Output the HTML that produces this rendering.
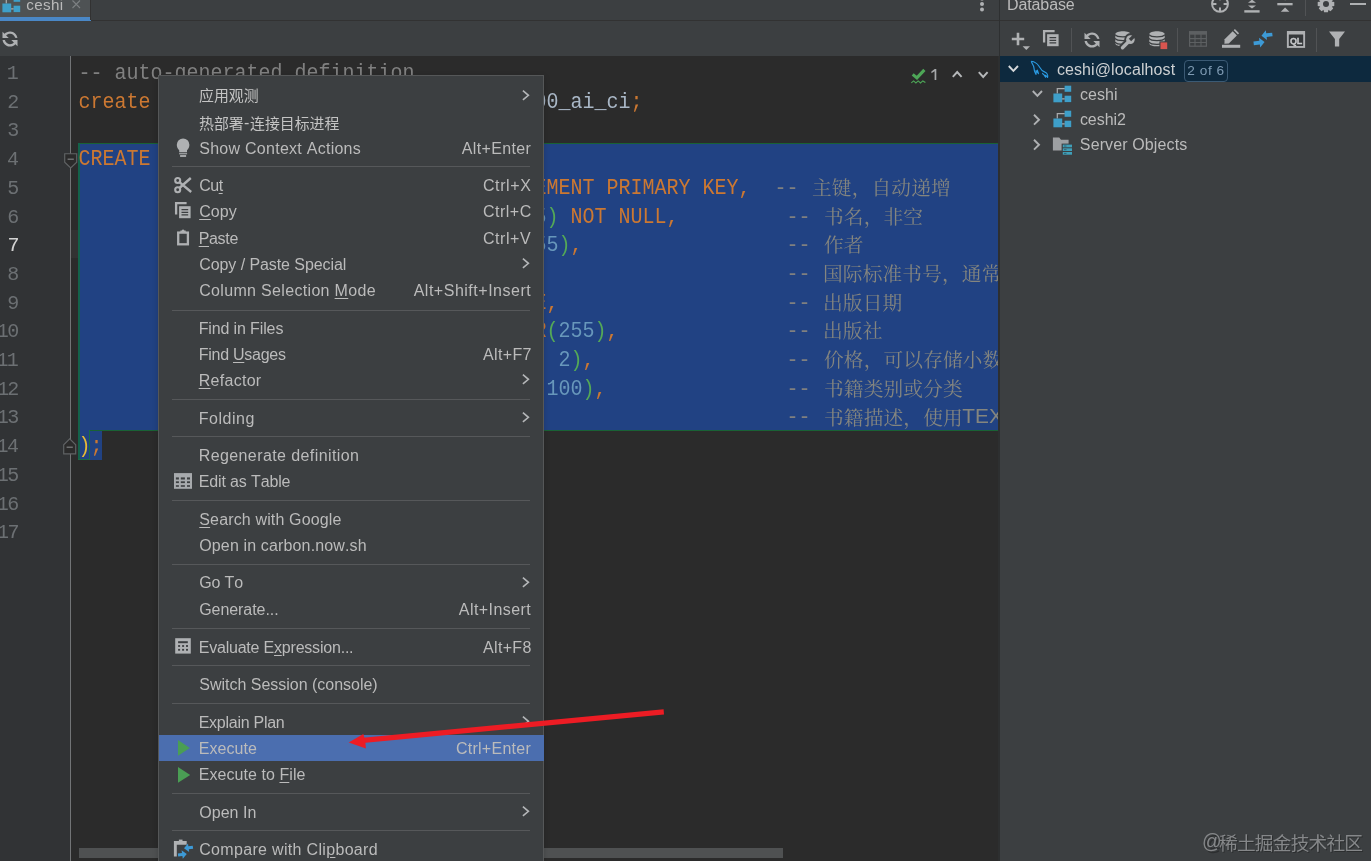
<!DOCTYPE html>
<html><head><meta charset="utf-8"><title>ceshi</title>
<style>
html,body{margin:0;padding:0}
body{width:1371px;height:861px;overflow:hidden;background:#3c3f41;position:relative;font-family:"Liberation Sans",sans-serif;font-kerning:none}
#r{position:absolute;left:0;top:0;width:1371px;height:861px;overflow:hidden;will-change:transform}
#r>div,#r>svg{position:absolute}
#r>svg{overflow:visible}
.t{font-family:"Liberation Sans",sans-serif;line-height:20px;white-space:pre;font-kerning:none}
.m{font-family:"Liberation Mono",monospace;line-height:20px;white-space:pre;font-kerning:none}
u{text-decoration:underline;text-underline-offset:1.6px;text-decoration-thickness:1.4px}
</style></head><body><div id="r">
<div style="left:0px;top:0px;width:90.3px;height:17px;background:#4e5254;"></div>
<div style="left:0px;top:16.5px;width:90.8px;height:4.6px;background:#4a88c7;"></div>
<div style="left:90.5px;top:20px;width:908.3px;height:1px;background:#323232;"></div>
<div style="left:90px;top:0px;width:1px;height:20px;background:#323232;"></div>
<div style="left:0px;top:56px;width:998px;height:805px;background:#2b2b2b;"></div>
<div style="left:0px;top:56px;width:70px;height:805px;background:#313335;"></div>
<div style="left:70.1px;top:56px;width:1.1px;height:805px;background:#727476;"></div>
<div style="left:71.2px;top:229.7px;width:6.8px;height:28.8px;background:#323232;"></div>
<div style="left:998.8px;top:0px;width:1.2px;height:56px;background:#2e3031;"></div>
<div style="left:997.6px;top:56px;width:2.4px;height:805px;background:#2d2f30;"></div>
<div style="left:1000px;top:20px;width:371px;height:1px;background:#323232;"></div>
<div style="left:1000px;top:56.4px;width:371px;height:25.2px;background:#0d293e;"></div>
<div class="t" style="left:26.25px;top:-5.00px;font-size:15.2px;color:#bbbbbb;letter-spacing:0.346px;">ceshi</div>
<svg style="left:0.6px;top:-6.2px;" width="20" height="20" viewBox="0 0 20 20"><path d="M5.3 9.6V4.7H12.8M10 14.8H12.8" fill="none" stroke="#a9abad" stroke-width="1.25"/><rect x="1.4" y="9.5" width="8.8" height="8.8" fill="#3e9fc9"/><rect x="12.6" y="1.7" width="6.6" height="6.1" fill="#3e9fc9"/><rect x="12.6" y="11.7" width="6.6" height="6.4" fill="#3e9fc9"/></svg>
<svg style="left:72px;top:-0.5px;" width="9" height="9" viewBox="0 0 9 9"><path d="M0.5 0.5L8 8M8 0.5L0.5 8" stroke="#7d8183" stroke-width="1.1" fill="none"/></svg>
<svg style="left:0.3999999999999999px;top:29.0px;" width="20" height="20" viewBox="0 0 16 16"><path transform="rotate(3 8 8)" fill="#afb1b3" d="M12.575 11.885C11.474 13.182 9.832 14.004 7.999 14.004C5.039 14.004 2.58 11.862 2.088 9.043L3.948 9.108C4.434 10.89 6.064 12.2 8 12.2C9.301 12.2 10.465 11.608 11.235 10.679L9.05 8.712L14.043 8.45L14.305 13.443ZM3.428 4.117C4.528 2.825 6.168 2.004 7.999 2.004C10.919 2.004 13.351 4.09 13.888 6.853L12.023 6.788C11.502 5.059 9.898 3.8 8 3.8C6.699 3.8 5.535 4.392 4.765 5.321L6.955 7.293L1.962 7.555L1.7 2.562Z"/></svg>
<svg style="left:979px;top:-5px;" width="6" height="18" viewBox="0 0 6 18"><circle cx="3" cy="3.6" r="2" fill="#afb1b3"/><circle cx="3" cy="9" r="2" fill="#afb1b3"/><circle cx="3" cy="14.5" r="2" fill="#afb1b3"/></svg>
<div style="left:78px;top:143px;width:920px;height:288px;background:#214283;"></div>
<div style="left:78px;top:431px;width:24.2px;height:29px;background:#214283;"></div>
<div style="left:78px;top:143px;width:920px;height:1.2px;background:#196235;"></div>
<div style="left:78px;top:143px;width:1.7px;height:317px;background:#14624a;"></div>
<div style="left:89px;top:430px;width:909px;height:1.3px;background:#196235;"></div>
<div style="left:88.6px;top:430px;width:1.4px;height:30px;background:#1a6a45;"></div>
<div style="left:78px;top:458.8px;width:12px;height:1.3px;background:#1a6a45;"></div>
<div class="m" style="left:6.86px;top:64.00px;font-size:20.0px;color:#6c7073;letter-spacing:-1.600px;">1</div>
<div class="m" style="left:7.31px;top:93.00px;font-size:20.0px;color:#6c7073;letter-spacing:-1.600px;">2</div>
<div class="m" style="left:7.17px;top:121.00px;font-size:20.0px;color:#6c7073;letter-spacing:-1.600px;">3</div>
<div class="m" style="left:6.91px;top:150.00px;font-size:20.0px;color:#6c7073;letter-spacing:-1.600px;">4</div>
<div class="m" style="left:7.17px;top:179.00px;font-size:20.0px;color:#6c7073;letter-spacing:-1.600px;">5</div>
<div class="m" style="left:7.20px;top:208.00px;font-size:20.0px;color:#6c7073;letter-spacing:-1.600px;">6</div>
<div class="m" style="left:7.46px;top:236.00px;font-size:20.0px;color:#d2d2d2;letter-spacing:-1.600px;">7</div>
<div class="m" style="left:7.22px;top:265.00px;font-size:20.0px;color:#6c7073;letter-spacing:-1.600px;">8</div>
<div class="m" style="left:7.28px;top:294.00px;font-size:20.0px;color:#6c7073;letter-spacing:-1.600px;">9</div>
<div class="m" style="left:-3.27px;top:322.00px;font-size:20.0px;color:#6c7073;letter-spacing:-1.600px;">10</div>
<div class="m" style="left:-3.54px;top:351.00px;font-size:20.0px;color:#6c7073;letter-spacing:-1.600px;">11</div>
<div class="m" style="left:-3.09px;top:380.00px;font-size:20.0px;color:#6c7073;letter-spacing:-1.600px;">12</div>
<div class="m" style="left:-3.23px;top:408.00px;font-size:20.0px;color:#6c7073;letter-spacing:-1.600px;">13</div>
<div class="m" style="left:-3.49px;top:437.00px;font-size:20.0px;color:#6c7073;letter-spacing:-1.600px;">14</div>
<div class="m" style="left:-3.23px;top:466.00px;font-size:20.0px;color:#6c7073;letter-spacing:-1.600px;">15</div>
<div class="m" style="left:-3.21px;top:495.00px;font-size:20.0px;color:#6c7073;letter-spacing:-1.600px;">16</div>
<div class="m" style="left:-2.94px;top:523.00px;font-size:20.0px;color:#6c7073;letter-spacing:-1.600px;">17</div>
<svg style="left:63.7px;top:153.2px;" width="14" height="16" viewBox="0 0 14 16"><path d="M0.7 0.7H12.7V9.2L6.7 15L0.7 9.2Z" fill="#2b2b2b" stroke="#606365" stroke-width="1.15"/><path d="M3.6 6.2H9.8" stroke="#808385" stroke-width="1.15"/></svg>
<svg style="left:63.3px;top:437.6px;" width="14" height="17" viewBox="0 0 14 17"><path d="M0.7 15.9H12.7V6.8L6.7 0.9L0.7 6.8Z" fill="#2b2b2b" stroke="#606365" stroke-width="1.15"/><path d="M3.6 9.2H9.8" stroke="#808385" stroke-width="1.15"/></svg>
<div class="m" style="left:78.50px;top:62.00px;font-size:20px;line-height:24px;transform:scaleY(1.07);transform-origin:0 17px"><span style="color:#808080">-- auto-generated definition</span></div>
<div class="m" style="left:78.50px;top:91.00px;font-size:20px;line-height:24px;transform:scaleY(1.07);transform-origin:0 17px"><span style="color:#cc7832">create schema </span><span style="color:#a9b7c6">ceshi </span><span style="color:#cc7832">collate </span><span style="color:#a9b7c6">utf8mb4_0900_ai_ci</span><span style="color:#cc7832">;</span></div>
<div class="m" style="left:78.50px;top:148.00px;font-size:20px;line-height:24px;transform:scaleY(1.07);transform-origin:0 17px"><span style="color:#cc7832">CREATE TABLE </span><span style="color:#a9b7c6">books </span><span style="color:#e8ba36">(</span></div>
<div class="m" style="left:534.50px;top:177.00px;font-size:20px;line-height:24px;transform:scaleY(1.07);transform-origin:0 17px"><span style="color:#cc7832">EMENT PRIMARY KEY,</span><span style="color:#808080">  -- </span></div>
<div class="m" style="left:534.50px;top:206.00px;font-size:20px;line-height:24px;transform:scaleY(1.07);transform-origin:0 17px"><span style="color:#6897bb">5</span><span style="color:#54a857">)</span><span style="color:#cc7832"> NOT NULL,</span><span style="color:#808080">         -- </span></div>
<div class="m" style="left:522.50px;top:234.00px;font-size:20px;line-height:24px;transform:scaleY(1.07);transform-origin:0 17px"><span style="color:#6897bb">255</span><span style="color:#54a857">)</span><span style="color:#cc7832">,</span><span style="color:#808080">                 -- </span></div>
<div class="m" style="left:786.50px;top:263.00px;font-size:20px;line-height:24px;transform:scaleY(1.07);transform-origin:0 17px"><span style="color:#808080">-- </span></div>
<div class="m" style="left:534.50px;top:292.00px;font-size:20px;line-height:24px;transform:scaleY(1.07);transform-origin:0 17px"><span style="color:#cc7832">E,</span><span style="color:#808080">                   -- </span></div>
<div class="m" style="left:534.50px;top:320.00px;font-size:20px;line-height:24px;transform:scaleY(1.07);transform-origin:0 17px"><span style="color:#cc7832">R</span><span style="color:#54a857">(</span><span style="color:#6897bb">255</span><span style="color:#54a857">)</span><span style="color:#cc7832">,</span><span style="color:#808080">              -- </span></div>
<div class="m" style="left:534.50px;top:349.00px;font-size:20px;line-height:24px;transform:scaleY(1.07);transform-origin:0 17px"><span style="color:#cc7832">, </span><span style="color:#6897bb">2</span><span style="color:#54a857">)</span><span style="color:#cc7832">,</span><span style="color:#808080">                -- </span></div>
<div class="m" style="left:534.50px;top:378.00px;font-size:20px;line-height:24px;transform:scaleY(1.07);transform-origin:0 17px"><span style="color:#54a857">(</span><span style="color:#6897bb">100</span><span style="color:#54a857">)</span><span style="color:#cc7832">,</span><span style="color:#808080">               -- </span></div>
<div class="m" style="left:786.50px;top:406.00px;font-size:20px;line-height:24px;transform:scaleY(1.07);transform-origin:0 17px"><span style="color:#808080">-- </span></div>
<div class="m" style="left:78.50px;top:435.00px;font-size:20px;line-height:24px;transform:scaleY(1.07);transform-origin:0 17px"><span style="color:#e8ba36">)</span><span style="color:#cc7832">;</span></div>
<svg role="img" aria-label="主键，自动递增" style="left:811.77px;top:174.90px;" width="143.0" height="27.6"><text x="0" y="19.70" font-size="19.7" fill="#84857f" letter-spacing="0.15" font-family="'Liberation Serif','Noto Serif CJK SC',serif">主键，自动递增</text></svg>
<svg role="img" aria-label="书名，非空" style="left:823.52px;top:203.60px;" width="103.2" height="27.6"><text x="0" y="19.70" font-size="19.7" fill="#84857f" letter-spacing="0.15" font-family="'Liberation Serif','Noto Serif CJK SC',serif">书名，非空</text></svg>
<svg role="img" aria-label="作者" style="left:823.97px;top:232.30px;" width="43.7" height="27.6"><text x="0" y="19.70" font-size="19.7" fill="#84857f" letter-spacing="0.15" font-family="'Liberation Serif','Noto Serif CJK SC',serif">作者</text></svg>
<svg role="img" aria-label="国际标准书号，通常" style="left:822.65px;top:261.00px;" width="182.7" height="27.6"><text x="0" y="19.70" font-size="19.7" fill="#84857f" letter-spacing="0.15" font-family="'Liberation Serif','Noto Serif CJK SC',serif">国际标准书号，通常</text></svg>
<svg role="img" aria-label="出版日期" style="left:822.87px;top:289.70px;" width="83.4" height="27.6"><text x="0" y="19.70" font-size="19.7" fill="#84857f" letter-spacing="0.15" font-family="'Liberation Serif','Noto Serif CJK SC',serif">出版日期</text></svg>
<svg role="img" aria-label="出版社" style="left:822.87px;top:318.40px;" width="63.6" height="27.6"><text x="0" y="19.70" font-size="19.7" fill="#84857f" letter-spacing="0.15" font-family="'Liberation Serif','Noto Serif CJK SC',serif">出版社</text></svg>
<svg role="img" aria-label="价格，可以存储小数" style="left:823.93px;top:347.10px;" width="182.7" height="27.6"><text x="0" y="19.70" font-size="19.7" fill="#84857f" letter-spacing="0.15" font-family="'Liberation Serif','Noto Serif CJK SC',serif">价格，可以存储小数</text></svg>
<svg role="img" aria-label="书籍类别或分类" style="left:823.52px;top:375.80px;" width="143.0" height="27.6"><text x="0" y="19.70" font-size="19.7" fill="#84857f" letter-spacing="0.15" font-family="'Liberation Serif','Noto Serif CJK SC',serif">书籍类别或分类</text></svg>
<svg role="img" aria-label="书籍描述，使用" style="left:823.52px;top:404.50px;" width="143.0" height="27.6"><text x="0" y="19.70" font-size="19.7" fill="#84857f" letter-spacing="0.15" font-family="'Liberation Serif','Noto Serif CJK SC',serif">书籍描述，使用</text></svg>
<div class="t" style="left:962.33px;top:406.00px;font-size:20.8px;color:#84857f;">TEX</div>
<div style="left:997.6px;top:56px;width:2.4px;height:805px;background:#2d2f30;"></div>
<div style="left:1000px;top:82px;width:371px;height:779px;background:#3c3f41;"></div>
<svg style="left:910.5px;top:67.5px;" width="15" height="16" viewBox="0 0 15 16"><path d="M1.7 6.4L5.9 9.9L13.4 1.9" fill="none" stroke="#4da657" stroke-width="3.1"/><path d="M0.3 14.9L2.6 12.9L4.9 14.9L7.2 12.9L9.5 14.9L11.8 12.9L14.4 14.6" fill="none" stroke="#4da657" stroke-width="1.15"/></svg>
<svg style="left:930px;top:68px;" width="8" height="13" viewBox="0 0 8 13"><path d="M4.7 1.1H6.3V11.9H4.6V3.3L1.4 5.2V3.5Z" fill="#a6a8aa"/></svg>
<svg style="left:951.8px;top:70.6px;" width="10.4" height="7" viewBox="0 0 10.4 7"><path d="M0.8 6L5.2 1L9.6 6" fill="none" stroke="#b6b8ba" stroke-width="1.9"/></svg>
<svg style="left:977.8px;top:71.3px;" width="10.4" height="7" viewBox="0 0 10.4 7"><path d="M0.8 1L5.2 6L9.6 1" fill="none" stroke="#b6b8ba" stroke-width="1.9"/></svg>
<div style="left:79px;top:848.3px;width:704.3px;height:9.7px;background:#4f5152;"></div>
<div class="t" style="left:1006.99px;top:-5.00px;font-size:16px;color:#bbbbbb;letter-spacing:-0.110px;">Database</div>
<svg style="left:1210px;top:-6px;" width="20" height="20" viewBox="0 0 20 20"><circle cx="10" cy="9.9" r="7.9" fill="none" stroke="#afb1b3" stroke-width="2"/><path d="M10 2V6.3M10 13.5V17.8M2.1 9.9H6.4M13.6 9.9H17.9" stroke="#afb1b3" stroke-width="2"/></svg>
<svg style="left:1242px;top:-7px;" width="20" height="20" viewBox="0 0 20 20"><rect x="2.3" y="17.2" width="15.3" height="2.4" fill="#afb1b3"/><path d="M6 12.6H14L10 15.6Z" fill="#afb1b3"/><path d="M6 9.8H14L10 6.6Z" fill="#afb1b3"/></svg>
<svg style="left:1275px;top:-7px;" width="20" height="20" viewBox="0 0 20 20"><rect x="2.3" y="10" width="15.3" height="2.3" fill="#afb1b3"/><path d="M5.8 18.8H14.4L10.1 14.6Z" fill="#afb1b3"/><path d="M5.8 3.2H14.4L10.1 7.4Z" fill="#afb1b3"/></svg>
<div style="left:1305px;top:0px;width:1px;height:15.5px;background:#515355;"></div>
<svg style="left:1315.7px;top:-6px;" width="20" height="20" viewBox="0 0 20 20"><path fill-rule="evenodd" fill="#afb1b3" d="M8.06,1.72 L11.94,1.72 L12.49,4.43 L12.18,4.30 L14.48,2.78 L17.22,5.52 L15.70,7.82 L15.57,7.51 L18.28,8.06 L18.28,11.94 L15.57,12.49 L15.70,12.18 L17.22,14.48 L14.48,17.22 L12.18,15.70 L12.49,15.57 L11.94,18.28 L8.06,18.28 L7.51,15.57 L7.82,15.70 L5.52,17.22 L2.78,14.48 L4.30,12.18 L4.43,12.49 L1.72,11.94 L1.72,8.06 L4.43,7.51 L4.30,7.82 L2.78,5.52 L5.52,2.78 L7.82,4.30 L7.51,4.43Z M10 7A3 3 0 1 0 10 13A3 3 0 1 0 10 7Z"/></svg>
<div style="left:1350.4px;top:2.7px;width:15.4px;height:2.4px;background:#afb1b3;"></div>
<svg style="left:1011px;top:32px;" width="20" height="19" viewBox="0 0 20 19"><path d="M0.8 7H13.2M7 0.8V13.2" stroke="#afb1b3" stroke-width="2.6"/><path d="M11.6 14.2H19L15.3 18Z" fill="#afb1b3"/></svg>
<svg style="left:1043.2px;top:30.4px;" width="17" height="17" viewBox="0 0 17 17"><path d="M1.1 12.6V1.1H11.6" fill="none" stroke="#afb1b3" stroke-width="2.3"/><rect x="4.1" y="4.2" width="11.5" height="12" fill="#afb1b3"/><path d="M6.5 7.7H13.2M6.5 10.3H13.2M6.5 12.9H13.2" stroke="#3c3f41" stroke-width="1.3"/></svg>
<div style="left:1071px;top:28px;width:1px;height:24px;background:#515355;"></div>
<svg style="left:1082.1000000000001px;top:29.9px;" width="20" height="20" viewBox="0 0 16 16"><path transform="rotate(3 8 8)" fill="#afb1b3" d="M12.575 11.885C11.474 13.182 9.832 14.004 7.999 14.004C5.039 14.004 2.58 11.862 2.088 9.043L3.948 9.108C4.434 10.89 6.064 12.2 8 12.2C9.301 12.2 10.465 11.608 11.235 10.679L9.05 8.712L14.043 8.45L14.305 13.443ZM3.428 4.117C4.528 2.825 6.168 2.004 7.999 2.004C10.919 2.004 13.351 4.09 13.888 6.853L12.023 6.788C11.502 5.059 9.898 3.8 8 3.8C6.699 3.8 5.535 4.392 4.765 5.321L6.955 7.293L1.962 7.555L1.7 2.562Z"/></svg>
<svg style="left:1114.6px;top:31.2px;" width="20" height="19" viewBox="0 0 20 19"><path d="M0.3 3.2C0.3 -0.7 15.7 -0.7 15.7 3.2V12.2C15.7 16.4 0.3 16.4 0.3 12.2Z" fill="#afb1b3"/><path d="M0 3.6C2 6.6 14 6.6 16 3.6M0 7.4C2 10.4 14 10.4 16 7.4M0 11.2C2 14.2 14 14.2 16 11.2" fill="none" stroke="#3c3f41" stroke-width="1.25"/><path d="M1.6 20L20 1.6V20Z" fill="#3c3f41"/><path d="M7.3 16.9L15 9.2" stroke="#3c3f41" stroke-width="7.4" stroke-linecap="round" fill="none"/><circle cx="15.6" cy="8.4" r="6.3" fill="#3c3f41"/><path d="M7.5 16.7L15 9.2" stroke="#afb1b3" stroke-width="3.4" stroke-linecap="round" fill="none"/><circle cx="15.4" cy="8.6" r="4.3" fill="#afb1b3"/><path d="M15 9L20.4 3.6" stroke="#3c3f41" stroke-width="3.3" fill="none"/></svg>
<svg style="left:1148.8px;top:31.2px;" width="20" height="19" viewBox="0 0 20 19"><path d="M0.3 3.2C0.3 -0.7 15.7 -0.7 15.7 3.2V12.2C15.7 16.4 0.3 16.4 0.3 12.2Z" fill="#afb1b3"/><path d="M0 3.6C2 6.6 14 6.6 16 3.6M0 7.4C2 10.4 14 10.4 16 7.4M0 11.2C2 14.2 14 14.2 16 11.2" fill="none" stroke="#3c3f41" stroke-width="1.25"/><rect x="10.4" y="10.3" width="9" height="9" fill="#3c3f41"/><rect x="11.5" y="11.4" width="6.7" height="6.7" fill="#d9554f"/></svg>
<div style="left:1177px;top:28px;width:1px;height:24px;background:#515355;"></div>
<svg style="left:1187.6px;top:29px;" width="20" height="20" viewBox="0 0 20 20"><rect x="1.6" y="2.7" width="16.8" height="14.5" fill="none" stroke="#5d6062" stroke-width="1.2"/><rect x="1" y="2.1" width="18" height="3.6" fill="#5d6062"/><path d="M7 5V17.5M13 5V17.5M1.5 9.6H18.5M1.5 13.5H18.5" stroke="#5d6062" stroke-width="1.1" fill="none"/></svg>
<svg style="left:1221px;top:29px;" width="20" height="20" viewBox="0 0 20 20"><rect x="1" y="15.8" width="18.2" height="3" fill="#afb1b3"/><path d="M3.4 14.7L3.6 10.3L11.7 2.2L15.9 6.4L7.8 14.5Z" fill="#afb1b3"/><path d="M12.7 1.2L13.9 0L18.1 4.2L16.9 5.4Z" fill="#afb1b3"/></svg>
<svg style="left:1253px;top:29px;" width="20" height="20" viewBox="0 0 20 20"><path d="M8.4 6.2L13.4 1.2V4.4H19.4V8H13.4V11.2Z" fill="#3d9ad6" transform="rotate(-7 13 6)"/><path d="M11.6 13.6L6.6 18.6V15.4H0.6V11.8H6.6V8.6Z" fill="#3d9ad6" transform="rotate(-7 7 13.6)"/></svg>
<svg style="left:1286px;top:30px;" width="20" height="19" viewBox="0 0 20 19"><rect x="1.9" y="2.1" width="16.2" height="14.8" fill="none" stroke="#afb1b3" stroke-width="2"/><rect x="1" y="1.1" width="18" height="3.6" fill="#afb1b3"/><rect x="2.9" y="4.7" width="14.2" height="11.2" fill="#35383a"/><text x="4.1" y="14.4" font-family="Liberation Sans, sans-serif" font-weight="700" font-size="9" fill="#c9cbcd" stroke="#c9cbcd" stroke-width="0.3" letter-spacing="-0.3">QL</text></svg>
<div style="left:1316.2px;top:28px;width:1px;height:24px;background:#515355;"></div>
<svg style="left:1328px;top:30px;" width="20" height="18" viewBox="0 0 20 18"><path d="M1 1.4H17L11.2 9V16.6H6.9V9Z" fill="#afb1b3"/></svg>
<div class="t" style="left:1056.92px;top:60.00px;font-size:16px;color:#cdd0d2;letter-spacing:0.104px;">ceshi@localhost</div>
<div class="t" style="left:1079.92px;top:85.00px;font-size:16px;color:#bbbbbb;letter-spacing:0.052px;">ceshi</div>
<div class="t" style="left:1079.92px;top:110.00px;font-size:16px;color:#bbbbbb;letter-spacing:-0.033px;">ceshi2</div>
<div class="t" style="left:1079.87px;top:135.00px;font-size:16px;color:#bbbbbb;letter-spacing:0.122px;">Server Objects</div>
<div style="left:1184.3px;top:60px;width:41.6px;height:19.8px;border:1px solid #3b5a74;border-radius:4px;box-sizing:content-box"></div>
<div class="t" style="left:1187.22px;top:61.00px;font-size:13.6px;color:#7f9bb3;letter-spacing:0.591px;">2 of 6</div>
<svg style="left:1008.4px;top:65.1px;" width="10.8" height="6.9" viewBox="0 0 10.8 6.9"><path d="M0.8 1L5.4 5.9L10.0 1" fill="none" stroke="#d5d8da" stroke-width="1.9"/></svg>
<svg style="left:1031.6px;top:90.2px;" width="10.8" height="6.9" viewBox="0 0 10.8 6.9"><path d="M0.8 1L5.4 5.9L10.0 1" fill="none" stroke="#afb1b3" stroke-width="1.9"/></svg>
<svg style="left:1032.6px;top:114.3px;" width="7" height="11.5" viewBox="0 0 7 11.5"><path d="M1 0.8L6 5.7L1 10.6" fill="none" stroke="#afb1b3" stroke-width="1.9"/></svg>
<svg style="left:1032.6px;top:139.2px;" width="7" height="11.5" viewBox="0 0 7 11.5"><path d="M1 0.8L6 5.7L1 10.6" fill="none" stroke="#afb1b3" stroke-width="1.9"/></svg>
<svg style="left:1030px;top:60px;" width="20" height="19" viewBox="0 0 20 19"><path d="M1.3 1.2C4.6 1.6 7.2 3.4 9 6.2C10.6 8.8 11.6 10.8 14 11.6C15.6 12.2 17 13 17.4 14.4C17.8 15.6 18 16.8 17.6 17.4C16.8 16.4 16.2 15.4 15.2 15.2C15.6 16 15.8 16.6 15.6 17.2C14.6 15.4 13.6 14.2 12.2 13.2M1.3 1.2C1.6 3 2.6 4.4 3.4 5.8C4.2 7.6 4 9.6 4.6 11.4C5 12.6 5.6 13.4 6 14.4C6.2 12.8 6.2 11.6 6 10.6C7 11.6 7.6 12.8 8.4 13.6C8 12 7.8 11 7.2 9.8" fill="none" stroke="#2b9be3" stroke-width="1.15" stroke-linejoin="round"/></svg>
<svg style="left:1051.8px;top:84.0px;" width="20" height="20" viewBox="0 0 20 20"><path d="M5.3 9.6V4.7H12.8M10 14.8H12.8" fill="none" stroke="#a9abad" stroke-width="1.25"/><rect x="1.4" y="9.5" width="8.8" height="8.8" fill="#3e9fc9"/><rect x="12.6" y="1.7" width="6.6" height="6.1" fill="#3e9fc9"/><rect x="12.6" y="11.7" width="6.6" height="6.4" fill="#3e9fc9"/></svg>
<svg style="left:1051.8px;top:109.1px;" width="20" height="20" viewBox="0 0 20 20"><path d="M5.3 9.6V4.7H12.8M10 14.8H12.8" fill="none" stroke="#a9abad" stroke-width="1.25"/><rect x="1.4" y="9.5" width="8.8" height="8.8" fill="#3e9fc9"/><rect x="12.6" y="1.7" width="6.6" height="6.1" fill="#3e9fc9"/><rect x="12.6" y="11.7" width="6.6" height="6.4" fill="#3e9fc9"/></svg>
<svg style="left:1052px;top:136px;" width="21" height="20" viewBox="0 0 21 20"><path d="M0.9 1.4H7.2L9 3.8H16.6V12.4H10.2V14.6H0.9Z" fill="#9da0a3"/><rect x="9.6" y="7.6" width="10.6" height="11.8" fill="#3c3f41"/><rect x="10.8" y="8.6" width="9.2" height="2.7" fill="#3f9fb8"/><rect x="10.8" y="12.3" width="9.2" height="2.7" fill="#3f9fb8"/><rect x="10.8" y="16" width="9.2" height="2.7" fill="#3f9fb8"/><path d="M12 10H14.5M12 13.7H14.5M12 17.4H14.5" stroke="#2e5f6e" stroke-width="0.9"/></svg>
<div style="left:158px;top:75px;width:384px;height:786px;background:#3c3f41;border:1px solid #555758;border-bottom:none;box-shadow:0 2px 6px rgba(0,0,0,.18)"></div>
<div style="left:159px;top:735.1px;width:384.5px;height:25.8px;background:#4b6eaf;"></div>
<div style="left:172px;top:166.0px;width:358px;height:1.1px;background:#56585a;"></div>
<div style="left:172px;top:309.5px;width:358px;height:1.1px;background:#56585a;"></div>
<div style="left:172px;top:399.3px;width:358px;height:1.1px;background:#56585a;"></div>
<div style="left:172px;top:436.0px;width:358px;height:1.1px;background:#56585a;"></div>
<div style="left:172px;top:499.9px;width:358px;height:1.1px;background:#56585a;"></div>
<div style="left:172px;top:564.2px;width:358px;height:1.1px;background:#56585a;"></div>
<div style="left:172px;top:628.1px;width:358px;height:1.1px;background:#56585a;"></div>
<div style="left:172px;top:665.0px;width:358px;height:1.1px;background:#56585a;"></div>
<div style="left:172px;top:702.5px;width:358px;height:1.1px;background:#56585a;"></div>
<div style="left:172px;top:792.7px;width:358px;height:1.1px;background:#56585a;"></div>
<div style="left:172px;top:830.0px;width:358px;height:1.1px;background:#56585a;"></div>
<svg role="img" aria-label="应用观测" style="left:198.76px;top:85.70px;" width="63.4" height="20.9"><text x="0" y="14.90" font-size="14.9" fill="#c4c4c4" font-family="'Liberation Sans','Noto Sans CJK SC',sans-serif">应用观测</text></svg>
<svg role="img" aria-label="热部署" style="left:198.66px;top:113.60px;" width="48.5" height="20.9"><text x="0" y="14.90" font-size="14.9" fill="#c4c4c4" font-family="'Liberation Sans','Noto Sans CJK SC',sans-serif">热部署</text></svg>
<div class="t" style="left:243.89px;top:113.00px;font-size:16px;color:#c4c4c4;">-</div>
<svg role="img" aria-label="连接目标进程" style="left:250.15px;top:113.60px;" width="93.1" height="20.9"><text x="0" y="14.90" font-size="14.9" fill="#c4c4c4" font-family="'Liberation Sans','Noto Sans CJK SC',sans-serif">连接目标进程</text></svg>
<div class="t" style="left:199.27px;top:139.00px;font-size:16px;color:#bbbbbb;letter-spacing:0.262px;">Show Context Actions</div>
<div class="t" style="left:461.77px;top:139.00px;font-size:16px;color:#bbbbbb;letter-spacing:0.355px;">Alt+Enter</div>
<div class="t" style="left:199.19px;top:176.00px;font-size:16px;color:#bbbbbb;letter-spacing:-0.484px;">Cu<u>t</u></div>
<div class="t" style="left:482.89px;top:176.00px;font-size:16px;color:#bbbbbb;letter-spacing:0.630px;">Ctrl+X</div>
<div class="t" style="left:199.19px;top:202.00px;font-size:16px;color:#bbbbbb;letter-spacing:0.097px;"><u>C</u>opy</div>
<div class="t" style="left:482.89px;top:202.00px;font-size:16px;color:#bbbbbb;letter-spacing:0.508px;">Ctrl+C</div>
<div class="t" style="left:198.69px;top:229.00px;font-size:16px;color:#bbbbbb;letter-spacing:-0.323px;"><u>P</u>aste</div>
<div class="t" style="left:482.89px;top:229.00px;font-size:16px;color:#bbbbbb;letter-spacing:0.577px;">Ctrl+V</div>
<div class="t" style="left:199.19px;top:255.00px;font-size:16px;color:#bbbbbb;letter-spacing:-0.071px;">Copy / Paste Special</div>
<svg style="left:521.6px;top:257.8px;" width="8" height="11" viewBox="0 0 8 11"><path d="M0.9 0.7L6.4 5.3L0.9 9.9" fill="none" stroke="#b4b6b8" stroke-width="1.6"/></svg>
<div class="t" style="left:199.19px;top:281.00px;font-size:16px;color:#bbbbbb;letter-spacing:0.328px;">Column Selection <u>M</u>ode</div>
<div class="t" style="left:413.67px;top:281.00px;font-size:16px;color:#bbbbbb;letter-spacing:0.511px;">Alt+Shift+Insert</div>
<div class="t" style="left:198.69px;top:319.00px;font-size:16px;color:#bbbbbb;letter-spacing:-0.130px;">Find in Files</div>
<div class="t" style="left:198.69px;top:345.00px;font-size:16px;color:#bbbbbb;letter-spacing:-0.253px;">Find <u>U</u>sages</div>
<div class="t" style="left:483.07px;top:345.00px;font-size:16px;color:#bbbbbb;letter-spacing:0.330px;">Alt+F7</div>
<div class="t" style="left:198.69px;top:371.00px;font-size:16px;color:#bbbbbb;letter-spacing:0.287px;"><u>R</u>efactor</div>
<svg style="left:521.6px;top:374.2px;" width="8" height="11" viewBox="0 0 8 11"><path d="M0.9 0.7L6.4 5.3L0.9 9.9" fill="none" stroke="#b4b6b8" stroke-width="1.6"/></svg>
<div class="t" style="left:198.69px;top:409.00px;font-size:16px;color:#bbbbbb;letter-spacing:0.528px;">Folding</div>
<svg style="left:521.6px;top:412.0px;" width="8" height="11" viewBox="0 0 8 11"><path d="M0.9 0.7L6.4 5.3L0.9 9.9" fill="none" stroke="#b4b6b8" stroke-width="1.6"/></svg>
<div class="t" style="left:198.69px;top:446.00px;font-size:16px;color:#bbbbbb;letter-spacing:0.407px;">Regenerate definition</div>
<div class="t" style="left:198.69px;top:472.00px;font-size:16px;color:#bbbbbb;letter-spacing:-0.130px;">Edit as Table</div>
<div class="t" style="left:199.27px;top:510.00px;font-size:16px;color:#bbbbbb;letter-spacing:0.147px;"><u>S</u>earch with Google</div>
<div class="t" style="left:199.24px;top:536.00px;font-size:16px;color:#bbbbbb;letter-spacing:0.143px;">Open in carbon.now.sh</div>
<div class="t" style="left:199.20px;top:573.00px;font-size:16px;color:#bbbbbb;letter-spacing:-0.121px;">Go To</div>
<svg style="left:521.6px;top:576.7px;" width="8" height="11" viewBox="0 0 8 11"><path d="M0.9 0.7L6.4 5.3L0.9 9.9" fill="none" stroke="#b4b6b8" stroke-width="1.6"/></svg>
<div class="t" style="left:199.20px;top:600.00px;font-size:16px;color:#bbbbbb;letter-spacing:-0.058px;">Generate...</div>
<div class="t" style="left:458.87px;top:600.00px;font-size:16px;color:#bbbbbb;letter-spacing:0.424px;">Alt+Insert</div>
<div class="t" style="left:198.69px;top:638.00px;font-size:16px;color:#bbbbbb;letter-spacing:-0.206px;">Evaluate E<u>x</u>pression...</div>
<div class="t" style="left:483.07px;top:638.00px;font-size:16px;color:#bbbbbb;letter-spacing:0.308px;">Alt+F8</div>
<div class="t" style="left:199.27px;top:675.00px;font-size:16px;color:#bbbbbb;letter-spacing:-0.014px;">Switch Session (console)</div>
<div class="t" style="left:198.69px;top:713.00px;font-size:16px;color:#bbbbbb;letter-spacing:-0.263px;">Explain Plan</div>
<svg style="left:521.6px;top:716.2px;" width="8" height="11" viewBox="0 0 8 11"><path d="M0.9 0.7L6.4 5.3L0.9 9.9" fill="none" stroke="#b4b6b8" stroke-width="1.6"/></svg>
<div class="t" style="left:198.69px;top:739.00px;font-size:16px;color:#bbbbbb;letter-spacing:0.052px;">Execute</div>
<div class="t" style="left:455.89px;top:739.00px;font-size:16px;color:#bbbbbb;letter-spacing:0.279px;">Ctrl+Enter</div>
<div class="t" style="left:198.69px;top:765.00px;font-size:16px;color:#bbbbbb;letter-spacing:0.064px;">Execute to <u>F</u>ile</div>
<div class="t" style="left:199.24px;top:803.00px;font-size:16px;color:#bbbbbb;letter-spacing:0.045px;">Open In</div>
<svg style="left:521.6px;top:805.9000000000001px;" width="8" height="11" viewBox="0 0 8 11"><path d="M0.9 0.7L6.4 5.3L0.9 9.9" fill="none" stroke="#b4b6b8" stroke-width="1.6"/></svg>
<div class="t" style="left:199.19px;top:840.00px;font-size:16px;color:#bbbbbb;letter-spacing:0.324px;">Compare with Cli<u>p</u>board</div>
<svg style="left:521.6px;top:89.8px;" width="8" height="11" viewBox="0 0 8 11"><path d="M0.9 0.7L6.4 5.3L0.9 9.9" fill="none" stroke="#b4b6b8" stroke-width="1.6"/></svg>
<svg style="left:173px;top:137px;" width="20" height="21" viewBox="0 0 20 21"><path d="M6.2 15.2V13.2C4.6 12 3.8 10 3.8 7.8A6.3 6.3 0 0 1 16.4 7.8C16.4 10 15.6 12 14 13.2V15.2Z" fill="#afb1b3"/><rect x="6.1" y="16.2" width="8" height="1.1" fill="#afb1b3"/><rect x="7.1" y="18.1" width="6" height="1.8" fill="#afb1b3"/></svg>
<svg style="left:173px;top:175px;" width="20" height="20" viewBox="0 0 20 20"><circle cx="4.7" cy="5.5" r="2.5" fill="none" stroke="#afb1b3" stroke-width="2.1"/><circle cx="4.7" cy="14.7" r="2.5" fill="none" stroke="#afb1b3" stroke-width="2.1"/><path d="M6.4 7.2L18.2 17M6.4 13L17.8 3" stroke="#afb1b3" stroke-width="2.4" fill="none"/></svg>
<svg style="left:175.4px;top:202.0px;" width="17" height="17" viewBox="0 0 17 17"><path d="M1.1 12.6V1.1H11.6" fill="none" stroke="#afb1b3" stroke-width="2.3"/><rect x="4.1" y="4.2" width="11.5" height="12" fill="#afb1b3"/><path d="M6.5 7.7H13.2M6.5 10.3H13.2M6.5 12.9H13.2" stroke="#3c3f41" stroke-width="1.3"/></svg>
<svg style="left:175px;top:228px;" width="16" height="19" viewBox="0 0 16 19"><rect x="3.2" y="4.6" width="9.7" height="11.7" fill="none" stroke="#afb1b3" stroke-width="2.3"/><path d="M5.4 4.2V2.5H6.8A1.3 1.3 0 0 1 9.3 2.5H10.7V4.2Z" fill="#afb1b3"/></svg>
<svg style="left:173px;top:471px;" width="20" height="20" viewBox="0 0 20 20"><rect x="1" y="2.1" width="18" height="15.7" fill="#a7aaad"/><rect x="2.9" y="6.4" width="3" height="2.1" fill="#3c3f41"/><rect x="2.9" y="10.3" width="3" height="1.8" fill="#3c3f41"/><rect x="2.9" y="14.2" width="3" height="1.6" fill="#3c3f41"/><rect x="7.8" y="6.4" width="4.1" height="2.1" fill="#3c3f41"/><rect x="7.8" y="10.3" width="4.1" height="1.8" fill="#3c3f41"/><rect x="7.8" y="14.2" width="4.1" height="1.6" fill="#3c3f41"/><rect x="14" y="6.4" width="3" height="2.1" fill="#3c3f41"/><rect x="14" y="10.3" width="3" height="1.8" fill="#3c3f41"/><rect x="14" y="14.2" width="3" height="1.6" fill="#3c3f41"/></svg>
<svg style="left:173px;top:636px;" width="20" height="20" viewBox="0 0 20 20"><rect x="2.2" y="2.2" width="15.6" height="15.4" fill="#afb1b3"/><rect x="5.1" y="5.2" width="9.7" height="2" fill="#3c3f41"/><rect x="5.1" y="9.1" width="2" height="1.8" fill="#3c3f41"/><rect x="5.1" y="12.9" width="2" height="1.8" fill="#3c3f41"/><rect x="9.1" y="9.1" width="2" height="1.8" fill="#3c3f41"/><rect x="9.1" y="12.9" width="2" height="1.8" fill="#3c3f41"/><rect x="13" y="9.1" width="2" height="1.8" fill="#3c3f41"/><rect x="13" y="12.9" width="2" height="1.8" fill="#3c3f41"/></svg>
<svg style="left:177px;top:739px;" width="14" height="18" viewBox="0 0 14 18"><path d="M1 1.1L12.8 9L1 16.8Z" fill="#4a9e54"/></svg>
<svg style="left:177px;top:765.6px;" width="14" height="18" viewBox="0 0 14 18"><path d="M1 1.1L13.2 9L1 16.8Z" fill="#4a9e54"/></svg>
<svg style="left:173px;top:838px;" width="21" height="23" viewBox="0 0 21 23"><path d="M0.9 18.6V2.9H13.7V6.7H3.8V18.6Z" fill="#afb1b3"/><rect x="5.9" y="1.6" width="3.6" height="2" fill="#afb1b3"/><path d="M11 9.8L15.6 5.6V8.4H20V11.4H15.6V14.2Z" fill="#3d9ad6" transform="rotate(-8 15 10)"/><path d="M13.8 16.6L9.2 20.8V18H5V15H9.2V12.2Z" fill="#3d9ad6" transform="rotate(-8 9 16.6)"/></svg>
<svg style="left:340px;top:700px" width="340" height="60" viewBox="340 700 340 60"><polygon points="663.6,709.2 664.0,714.4 363,743.1 363,737.8" fill="#ed1c24"/><polygon points="348.7,742.6 363.3,733.9 365.2,740.3 365.9,748.5" fill="#ed1c24"/></svg>
<svg role="img" aria-label="@" style="left:1203.51px;top:830.50px;" width="23.0" height="27.2"><text x="0" y="19.40" font-size="19.4" fill="#2c2e2f" font-family="'Liberation Sans','Noto Sans CJK SC',sans-serif">@</text></svg>
<svg role="img" aria-label="稀土掘金技术社区" style="left:1220.30px;top:831.80px;" width="147.4" height="26.2"><text x="0" y="18.70" font-size="18.7" fill="#2c2e2f" letter-spacing="-0.78" font-family="'Liberation Sans','Noto Sans CJK SC',sans-serif">稀土掘金技术社区</text></svg>
<svg role="img" aria-label="@" style="left:1202.41px;top:829.40px;" width="23.0" height="27.2"><text x="0" y="19.40" font-size="19.4" fill="#858789" font-family="'Liberation Sans','Noto Sans CJK SC',sans-serif">@</text></svg>
<svg role="img" aria-label="稀土掘金技术社区" style="left:1219.20px;top:830.70px;" width="147.4" height="26.2"><text x="0" y="18.70" font-size="18.7" fill="#858789" letter-spacing="-0.78" font-family="'Liberation Sans','Noto Sans CJK SC',sans-serif">稀土掘金技术社区</text></svg>
</div></body></html>
